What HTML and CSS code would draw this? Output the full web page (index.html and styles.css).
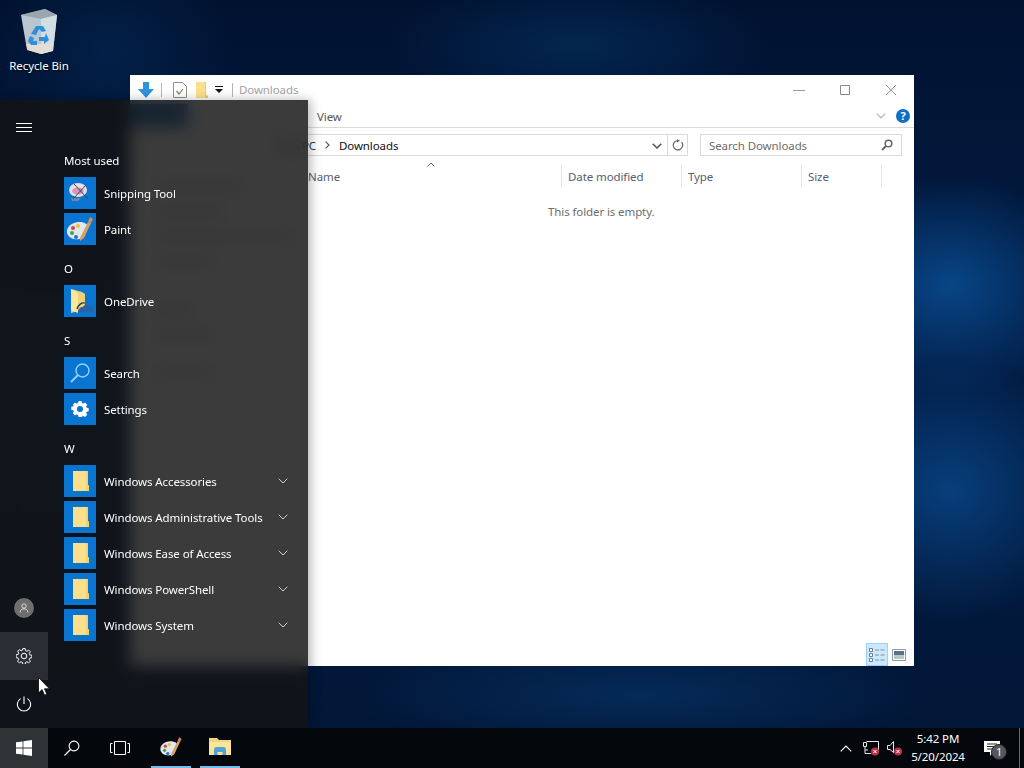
FILE: index.html
```html
<!DOCTYPE html>
<html lang="en">
<head>
<meta charset="utf-8">
<title>Windows desktop</title>
<link rel="stylesheet" href="styles.css">
</head>
<body>
<svg class="defs" width="0" height="0">
  <defs>
    <symbol id="sys-folder" viewBox="0 0 32 32">
      <path d="M9 6h15v14l1 1v5H9z" fill="#fbe08c"/>
      <path d="M22 6h2v14l1 1v5h-3z" fill="#f3d272"/>
    </symbol>
    <symbol id="chev" viewBox="0 0 10 6">
      <path d="M.7.7 5 5 9.3.7" fill="none" stroke="#cfcfcf" stroke-width="1"/>
    </symbol>
    <symbol id="palette" viewBox="0 0 32 32">
      <path d="M3 20c-1-6 5-11 12-11 5 0 9 2 9 5 0 2-3 2-3 5 0 2 1 3-1 5-5 4-15 3-17-4z" fill="#dfe6ee"/>
      <circle cx="9" cy="15" r="2" fill="#d8433b"/>
      <circle cx="14" cy="13" r="2" fill="#f0c030"/>
      <circle cx="8" cy="20" r="2" fill="#3aa655"/>
      <circle cx="12" cy="24" r="2" fill="#2d6fd0"/>
      <path d="M16 25 24 9l3 1-7 15-4 3z" fill="#d3a35f"/>
      <path d="m24 9 2-5 3 2-2 4z" fill="#d98c5a"/>
    </symbol>
  </defs>
</svg>

<div class="desktop">
  <div class="shortcut">
    <svg class="bin" viewBox="0 0 48 48" width="48" height="48">
      <path d="M6 9 30 3l12 6-4 36-12 3-14-4z" fill="#b9c6d0"/>
      <path d="M6 9 30 3l12 6-16 4z" fill="#9aa6af"/>
      <path d="M26 13l16-4-4 36-12 3z" fill="#d3dde4"/>
      <path d="M11 38h26l-1 7-10 3-13-4z" fill="#e6dcd6"/>
      <path d="M16 28l5-8h7l3 5-4 1-3-3-3 6zM31 27l3 7-5 4v-3h-5v-4h6zM15 30l4 2-1 3h4v4h-6l-3-4z" fill="#2e8fdb"/>
    </svg>
    <span class="shortcut-label">Recycle Bin</span>
  </div>

  <section class="window">
    <header class="titlebar">
      <svg class="qa-down" viewBox="0 0 16 16" width="16" height="16"><path d="M5 0h6v7h5l-8 9-8-9h5z" fill="#2f94dd"/></svg>
      <span class="qa-sep"></span>
      <svg class="qa-doc" viewBox="0 0 14 16" width="14" height="16"><path d="M.5.5h9l4 4v11H.5z" fill="#fff" stroke="#8f8f8f"/><path d="m3.5 9 2.5 3 4-5" fill="none" stroke="#8a7a62" stroke-width="1.2"/></svg>
      <svg class="qa-folder" viewBox="0 0 14 16" width="14" height="16"><path d="M1 0h10v13l2 1v2H1z" fill="#fbe08c"/><path d="M10 0h1v13l2 1v2h-3z" fill="#efc95f"/></svg>
      <svg class="qa-drop" viewBox="0 0 8 7" width="8" height="7"><path d="M0 0h8v1H0zM0 3h8L4 7z" fill="#111"/></svg>
      <span class="qa-sep qa-sep-2"></span>
      <span class="title-text">Downloads</span>
      <div class="win-buttons">
        <span class="win-btn"><svg viewBox="0 0 12 12" width="12" height="12"><path d="M0 6.500h12" stroke="#9a9a9a"/></svg></span>
        <span class="win-btn"><svg viewBox="0 0 12 12" width="12" height="12"><path d="M1.500 1.500h9v9h-9z" fill="none" stroke="#8a8a8a"/></svg></span>
        <span class="win-btn"><svg viewBox="0 0 12 12" width="12" height="12"><path d="m1 1 10 10M11 1 1 11" stroke="#9a9a9a"/></svg></span>
      </div>
    </header>

    <div class="ribbon">
      <span class="file-tab"></span>
      <span class="ribbon-tab">View</span>
      <svg class="ribbon-chev" viewBox="0 0 10 6" width="10" height="6"><path d="M.7.7 5 5 9.300.7" fill="none" stroke="#b5b5b5" stroke-width="1.200"/></svg>
      <span class="help">?</span>
    </div>

    <div class="addressrow">
      <div class="addressbox">
        <span class="crumb crumb-first">This PC</span>
        <svg class="crumb-arrow" viewBox="0 0 5 8" width="5" height="8"><path d="m.6.600 3.400 3.400-3.400 3.400" fill="none" stroke="#555" stroke-width="1.100"/></svg>
        <span class="crumb crumb-last">Downloads</span>
        <svg class="addr-drop" viewBox="0 0 10 6" width="10" height="6"><path d="M.7.700 5 5 9.300.700" fill="none" stroke="#555" stroke-width="1.500"/></svg>
        <span class="refresh">
          <svg viewBox="0 0 12 12" width="12" height="12"><path d="M9.600 3.200A4.700 4.700 0 1 1 6 1.500" fill="none" stroke="#666" stroke-width="1.200"/><path d="M5 0v3.500l3-1.700z" fill="#666"/></svg>
        </span>
      </div>
      <div class="searchbox">
        <span class="search-text">Search Downloads</span>
        <svg viewBox="0 0 12 12" width="12" height="12"><circle cx="7.500" cy="4.500" r="3.300" fill="none" stroke="#666" stroke-width="1.500"/><path d="M5 7 1 11" stroke="#666" stroke-width="2"/></svg>
      </div>
    </div>

    <div class="explorer">
      <nav class="navpane">
        <span class="navline nl1"></span>
        <span class="navline nl2"></span>
        <span class="navline nl3"></span>
        <span class="navline nl4"></span>
        <span class="navline nl5"></span>
        <span class="navline nl6"></span>
        <span class="navline nl7"></span>
      </nav>
      <div class="filepane">
        <div class="columns">
          <span class="col col-name">Name<svg class="sort" viewBox="0 0 8 5" width="8" height="5"><path d="M.5 4.500 4 1l3.500 3.500" fill="none" stroke="#666"/></svg></span>
          <span class="col col-date">Date modified</span>
          <span class="col col-type">Type</span>
          <span class="col col-size">Size</span>
        </div>
        <p class="empty">This folder is empty.</p>
        <div class="viewbar">
          <span class="view-btn view-on">
            <svg viewBox="0 0 18 16" width="18" height="16"><path d="M1.500 1.500h3v3h-3zM1.500 6.500h3v3h-3zM1.500 11.500h3v3h-3z" fill="#fff" stroke="#6c7f90"/><path d="M7 3h4M12.500 3h4M7 8h4M12.500 8h4M7 13h4M12.500 13h4" stroke="#7f8f9d"/></svg>
          </span>
          <span class="view-btn">
            <svg viewBox="0 0 14 12" width="14" height="12"><path d="M.5.500h13v11H.5z" fill="#fff" stroke="#8b9aa6"/><path d="M2 2h10v4H2z" fill="#5b7288"/><path d="M2 6h10v4H2z" fill="#b9c8c9"/></svg>
          </span>
        </div>
      </div>
    </div>
  </section>

  <aside class="startmenu">
    <div class="rail">
      <span class="rail-btn rail-menu">
        <svg viewBox="0 0 16 10" width="16" height="10"><path d="M0 .500h16M0 4.500h16M0 8.500h16" stroke="#fff"/></svg>
      </span>
      <div class="rail-bottom">
        <span class="rail-btn">
          <span class="avatar"><svg viewBox="0 0 10 10" width="10" height="10"><circle cx="5" cy="3" r="2.200" fill="none" stroke="#e4e4e4" stroke-width=".9"/><path d="M1 9.500c.4-3 2-3.600 4-3.600s3.600.6 4 3.600" fill="none" stroke="#e4e4e4" stroke-width=".9"/></svg></span>
        </span>
        <span class="rail-btn rail-hover">
          <svg viewBox="0 0 16 16" width="16" height="16"><g fill="none" stroke="#fff"><circle cx="8" cy="8" r="2.800"/><path d="M6.800.600h2.400l.4 2.100 1.300.6 1.800-1.200 1.700 1.700-1.200 1.800.6 1.300 2.100.4v2.400l-2.100.4-.6 1.300 1.200 1.800-1.700 1.700-1.800-1.200-1.300.6-.4 2.100H6.800l-.4-2.100-1.300-.6-1.800 1.200-1.700-1.700 1.200-1.800-.6-1.300-2.100-.4V6.800l2.100-.4.6-1.300-1.200-1.800 1.700-1.700 1.800 1.200 1.300-.6z"/></g></svg>
        </span>
        <span class="rail-btn">
          <svg viewBox="0 0 16 16" width="16" height="16"><path d="M4.600 2.600a6.700 6.700 0 1 0 6.800 0M8 .500v7.500" fill="none" stroke="#fff" stroke-width="1.100"/></svg>
        </span>
      </div>
    </div>
    <div class="applist">
      <div class="group-head">Most used</div>
      <div class="app">
        <span class="tile"><svg viewBox="0 0 32 32" width="32" height="32"><ellipse cx="14" cy="13" rx="9" ry="7" fill="#e8dfe6"/><ellipse cx="14" cy="14" rx="6" ry="3.500" fill="#d897b5"/><path d="M7 21h10l-3 3H8z" fill="#6d88a8"/><path d="M10 7l14 15M22 8 9 22" stroke="#31475e" stroke-width="1"/></svg></span>
        <span class="app-name">Snipping Tool</span>
      </div>
      <div class="app">
        <span class="tile"><svg width="32" height="32"><use href="#palette"/></svg></span>
        <span class="app-name">Paint</span>
      </div>
      <div class="group-head">O</div>
      <div class="app">
        <span class="tile"><svg viewBox="0 0 32 32" width="32" height="32"><path d="M7 4l11 3 3 2v15l-14 4z" fill="#f1d175"/><path d="M7 4l7 4v20l-7-3z" fill="#f9e6a1"/><path d="M14 27c0-3 2-5 5-5 1-3 8-3 9 1 2 .5 2 4 0 4z" fill="#2a62a8"/><path d="M13 24c1-4 5-7 8-6" fill="none" stroke="#24344a" stroke-width="1.300"/></svg></span>
        <span class="app-name">OneDrive</span>
      </div>
      <div class="group-head">S</div>
      <div class="app">
        <span class="tile"><svg viewBox="0 0 32 32" width="32" height="32"><circle cx="18.500" cy="13.500" r="6.500" fill="none" stroke="#8fd6f7" stroke-width="1.400"/><path d="M14 18 7 25" stroke="#8fd6f7" stroke-width="1.800"/></svg></span>
        <span class="app-name">Search</span>
      </div>
      <div class="app">
        <span class="tile"><svg viewBox="0 0 32 32" width="32" height="32"><path fill="#fff" fill-rule="evenodd" d="M14 7h4l.6 2.600 1.800.8 2.300-1.400 2.800 2.800-1.400 2.300.8 1.800 2.600.6v4l-2.600.6-.8 1.800 1.400 2.300-2.800 2.800-2.300-1.400-1.800.8L18 28h-4l-.6-2.600-1.800-.8-2.300 1.400-2.800-2.800 1.400-2.300-.8-1.800-2.600-.6v-4l2.600-.6.8-1.800L6.500 11.800l2.800-2.800 2.300 1.400 1.800-.8zM16 13.500a4 4 0 1 0 0 8 4 4 0 0 0 0-8z" transform="translate(16 16) scale(.76) translate(-16 -17.500)"/></svg></span>
        <span class="app-name">Settings</span>
      </div>
      <div class="group-head">W</div>
      <div class="app">
        <span class="tile"><svg width="32" height="32"><use href="#sys-folder"/></svg></span>
        <span class="app-name">Windows Accessories</span>
        <svg class="app-chev" width="10" height="6"><use href="#chev"/></svg>
      </div>
      <div class="app">
        <span class="tile"><svg width="32" height="32"><use href="#sys-folder"/></svg></span>
        <span class="app-name">Windows Administrative Tools</span>
        <svg class="app-chev" width="10" height="6"><use href="#chev"/></svg>
      </div>
      <div class="app">
        <span class="tile"><svg width="32" height="32"><use href="#sys-folder"/></svg></span>
        <span class="app-name">Windows Ease of Access</span>
        <svg class="app-chev" width="10" height="6"><use href="#chev"/></svg>
      </div>
      <div class="app">
        <span class="tile"><svg width="32" height="32"><use href="#sys-folder"/></svg></span>
        <span class="app-name">Windows PowerShell</span>
        <svg class="app-chev" width="10" height="6"><use href="#chev"/></svg>
      </div>
      <div class="app">
        <span class="tile"><svg width="32" height="32"><use href="#sys-folder"/></svg></span>
        <span class="app-name">Windows System</span>
        <svg class="app-chev" width="10" height="6"><use href="#chev"/></svg>
      </div>
    </div>
  </aside>

  <footer class="taskbar">
    <span class="tb-btn tb-start">
      <svg viewBox="0 0 16 16" width="16" height="16"><path d="M0 2.300 6.600 1.400v6.200H0zM7.400 1.300 16 0v7.600H7.400zM0 8.400h6.600v6.200L0 13.700zM7.400 8.400H16V16l-8.600-1.300z" fill="#fff"/></svg>
    </span>
    <span class="tb-btn">
      <svg viewBox="0 0 16 16" width="16" height="16"><circle cx="10" cy="6" r="4.900" fill="none" stroke="#fff" stroke-width="1.100"/><path d="M6.500 9.500 .5 15.500" stroke="#fff" stroke-width="1.300"/></svg>
    </span>
    <span class="tb-btn">
      <svg viewBox="0 0 20 14" width="20" height="14"><path d="M4.500.500h11v13h-11zM2.500 2.500H.5v9h2M17.500 2.500h2v9h-2" fill="none" stroke="#fff"/></svg>
    </span>
    <div class="tb-apps">
      <span class="tb-app">
        <svg width="26" height="26" viewBox="0 0 32 32"><use href="#palette"/></svg>
      </span>
      <span class="tb-app">
        <svg viewBox="0 0 24 20" width="24" height="20"><path d="M1 1h8l2 2h12v14H1z" fill="#f3d680"/><path d="M1 5h22v13H1z" fill="#fce49a"/><path d="M6 18v-5a3 3 0 0 1 3-3h6a3 3 0 0 1 3 3v5h-3.500v-3h-5v3z" fill="#4da3d8"/></svg>
      </span>
    </div>
    <div class="tray">
      <svg class="tray-up" viewBox="0 0 12 7" width="12" height="7"><path d="M.7 6.300 6 1l5.300 5.300" fill="none" stroke="#fff" stroke-width="1.100"/></svg>
      <span class="tray-icon">
        <svg viewBox="0 0 18 16" width="18" height="16"><path d="M2.500 2.500h3v4h-3zM5.500 1.500h12v9h-4M4 6.500v7h6M4 10h3" fill="none" stroke="#e8e8e8"/><circle cx="14" cy="11.500" r="4" fill="#b93449"/><path d="m12.500 10 3 3m0-3-3 3" stroke="#fff"/></svg>
      </span>
      <span class="tray-icon">
        <svg viewBox="0 0 18 16" width="18" height="16"><path d="M3.500 5.500h2.500l3.500-4v11l-3.500-3H3.500z" fill="none" stroke="#e8e8e8"/><circle cx="14" cy="11.500" r="4" fill="#b93449"/><path d="m12.500 10 3 3m0-3-3 3" stroke="#fff"/></svg>
      </span>
      <div class="clock">
        <span>5:42 PM</span>
        <span>5/20/2024</span>
      </div>
      <span class="notify">
        <svg viewBox="0 0 16 15" width="16" height="15"><path d="M0 0h16v11H9l-3 4v-4H0z" fill="#fff"/><path d="M3 3h10M3 5.500h10M3 8h7" stroke="#222"/></svg>
        <span class="notify-badge">1</span>
      </span>
      <span class="show-desktop"></span>
    </div>
  </footer>

  <svg class="cursor" viewBox="0 0 12 19" width="12" height="19"><path d="M.5.500v15.500l3.600-3.400 2.400 5.600 2.400-1-2.400-5.400h5z" fill="#fff" stroke="#000" stroke-width=".8"/></svg>
</div>
</body>
</html>
```
FILE: styles.css
```css
* { box-sizing: border-box; }
html, body { margin: 0; padding: 0; }
body { width: 1024px; height: 768px; overflow: hidden; font-family: "Noto Sans", "Open Sans", sans-serif; font-size: 11.5px; letter-spacing: -.1px; }
.defs { position: absolute; }

.desktop {
  position: relative;
  width: 1024px;
  height: 768px;
  overflow: hidden;
  background:
    radial-gradient(ellipse 140px 110px at 950px 285px, rgba(10, 88, 165, .7), rgba(10, 88, 165, 0)),
    radial-gradient(ellipse 140px 130px at 950px 490px, rgba(10, 82, 155, .65), rgba(10, 82, 155, 0)),
    radial-gradient(ellipse 190px 70px at 577px 45px, rgba(6, 64, 120, .42), rgba(6, 64, 120, 0)),
    radial-gradient(ellipse 290px 60px at 640px 695px, rgba(8, 66, 128, .45), rgba(8, 66, 128, 0)),
    radial-gradient(ellipse 120px 100px at 110px 50px, rgba(6, 60, 115, .3), rgba(6, 60, 115, 0)),
    linear-gradient(180deg, #011231 0%, #021c44 50%, #021636 100%);
}

.shortcut {
  position: absolute;
  left: 2px;
  top: 6px;
  width: 74px;
  display: flex;
  flex-direction: column;
  align-items: center;
  gap: 4px;
  color: #fff;
}
.shortcut-label { line-height: 16px; text-shadow: 0 1px 2px #000; }

/* Explorer window */
.window {
  position: absolute;
  left: 130px;
  top: 75px;
  width: 784px;
  height: 591px;
  background: #fff;
  display: flex;
  flex-direction: column;
  color: #566070;
}
.titlebar { height: 29px; display: flex; align-items: center; padding-left: 8px; flex: none; }
.qa-sep { width: 1px; height: 14px; background: #b5b5b5; margin: 0 11px 0 7px; }
.qa-sep-2 { margin: 0 6px 0 9px; }
.qa-folder { margin-left: 8px; }
.qa-drop { margin-left: 6px; }
.title-text { color: #a3a3a3; }
.win-buttons { margin-left: auto; display: flex; }
.win-btn { width: 46px; height: 29px; display: flex; align-items: center; justify-content: center; }

.ribbon { height: 24px; flex: none; display: flex; align-items: center; border-bottom: 1px solid #d9d9d9; padding-right: 4px; }
.file-tab { width: 58px; height: 23px; background: #1c6fb8; }
.ribbon-tab { margin: 2px 0 0 129px; color: #555; }
.ribbon-chev { margin-left: auto; margin-right: 10px; }
.help { width: 14px; height: 14px; border-radius: 50%; background: #0f6fc6; color: #fff; font-size: 11px; font-weight: 700; line-height: 14px; text-align: center; }

.addressrow { display: flex; flex: none; gap: 12px; padding: 6px 12px 0 10px; }
.addressbox { width: 548px; height: 22px; border: 1px solid #d9d9d9; display: flex; align-items: center; color: #111; }
.crumb { white-space: nowrap; }
.crumb-first { width: 175px; text-align: right; color: #333; }
.crumb-arrow { margin: 0 9px 0 9px; }
.crumb-last { color: #111; }
.addr-drop { margin: 1px 5px 0 auto; }
.refresh { width: 20px; height: 20px; border-left: 1px solid #d9d9d9; display: flex; align-items: center; justify-content: center; }
.searchbox { width: 202px; height: 22px; border: 1px solid #d9d9d9; display: flex; align-items: center; justify-content: space-between; padding: 0 8px; color: #6d6d6d; }

/* Explorer body */
.explorer { flex: 1; display: flex; min-height: 0; }
.navpane { width: 172px; flex: none; display: flex; flex-direction: column; padding: 26px 0 0 24px; }
.navline { display: block; height: 9px; background: #dedede; margin-bottom: 16px; width: 80px; }
.nl1 { width: 90px; }
.nl2 { width: 70px; }
.nl3 { width: 140px; }
.nl4 { width: 60px; margin-bottom: 40px; }
.nl5 { width: 40px; }
.nl6 { width: 60px; margin-bottom: 28px; }
.nl7 { width: 60px; }

.filepane { flex: 1; display: flex; flex-direction: column; min-width: 0; }
.columns { display: flex; height: 22px; margin-top: 9px; flex: none; }
.col { display: flex; align-items: center; padding-left: 6px; border-right: 1px solid #e5e5e5; position: relative; color: #566070; }
.col-name { width: 260px; }
.col-date, .col-type { width: 120px; }
.col-size { width: 80px; }
.sort { position: absolute; left: 125px; top: -3px; }
.empty { margin: 17px 0 0; padding-left: 246px; color: #6d6d6d; line-height: 16px; }
.viewbar { margin-top: auto; display: flex; justify-content: flex-end; align-items: center; gap: 4px; padding-right: 8px; }
.view-btn { height: 23px; display: flex; align-items: center; justify-content: center; }
.view-on { width: 22px; background: #cce8ff; border: 1px solid #99d1ff; }

/* Start menu */
.startmenu {
  position: absolute;
  left: 0;
  top: 100px;
  width: 308px;
  height: 628px;
  display: flex;
  background: rgba(19, 19, 19, .83);
  -webkit-backdrop-filter: blur(8px);
  backdrop-filter: blur(8px);
  box-shadow: 3px 0 10px rgba(0, 0, 0, .28);
  color: #fff;
}
.rail { width: 48px; flex: none; display: flex; flex-direction: column; justify-content: space-between; }
.rail-btn { width: 48px; height: 48px; display: flex; align-items: center; justify-content: center; }
.rail-menu { margin-top: 4px; }
.rail-hover { background: rgba(255, 255, 255, .11); }
.avatar { width: 20px; height: 20px; border-radius: 50%; background: #6e6e6e; display: flex; align-items: center; justify-content: center; }

.applist { flex: 1; padding: 39px 8px 0 16px; min-width: 0; }
.group-head { height: 36px; padding-top: 14px; line-height: 16px; color: #fff; }
.app { height: 36px; display: flex; align-items: center; gap: 8px; }
.tile { width: 32px; height: 32px; background: #0a74d1; flex: none; display: block; }
.tile svg { display: block; }
.app-name { color: #fff; }
.app-chev { margin-left: auto; margin-right: 12px; }

/* Taskbar */
.taskbar {
  position: absolute;
  left: 0;
  right: 0;
  bottom: 0;
  height: 40px;
  background: #04070c;
  display: flex;
  align-items: center;
  color: #fff;
}
.tb-btn { width: 48px; height: 40px; display: flex; align-items: center; justify-content: center; flex: none; }
.tb-start { background: #2f3336; }
.tb-apps { display: flex; gap: 9px; padding-left: 7px; height: 40px; }
.tb-app { width: 40px; height: 40px; display: flex; align-items: center; justify-content: center; border-bottom: 2px solid #76b9ed; }
.tray { margin-left: auto; display: flex; align-items: center; height: 40px; }
.tray-up { margin-right: 6px; }
.tray-icon { width: 23px; display: flex; justify-content: center; }
.clock { width: 68px; display: flex; flex-direction: column; align-items: center; line-height: 18px; margin-right: 4px; }
.notify { width: 31px; position: relative; display: flex; justify-content: center; }
.notify-badge { position: absolute; left: 15px; top: 3px; width: 16px; height: 16px; border-radius: 50%; background: #55595e; border: 1px solid #222; font-size: 11px; line-height: 14px; text-align: center; color: #fff; }
.show-desktop { width: 1px; height: 40px; background: #6a6a6a; margin-left: 12px; margin-right: 4px; }

.cursor { position: absolute; left: 38px; top: 677px; }
```
